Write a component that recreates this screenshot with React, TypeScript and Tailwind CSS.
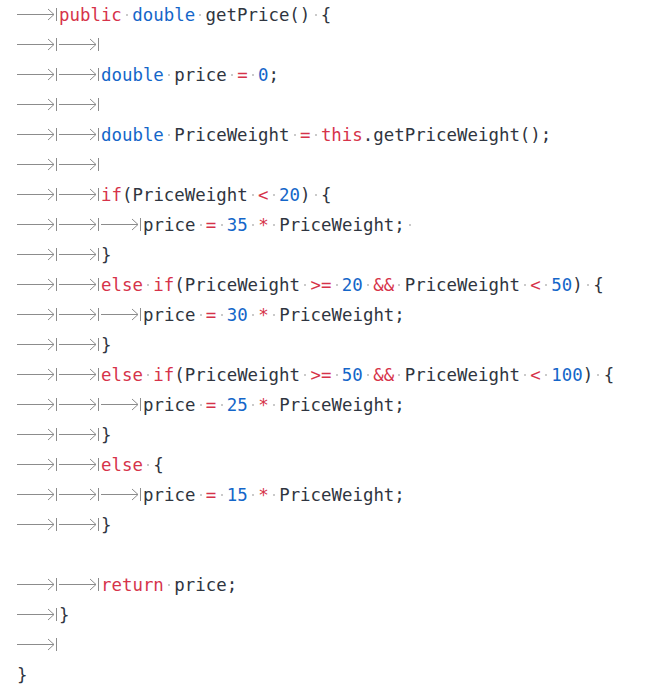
import React from "react";

const lines: string[] = [
  "\tpublic double getPrice() {",
  "\t\t",
  "\t\tdouble price = 0;",
  "\t\t",
  "\t\tdouble PriceWeight = this.getPriceWeight();",
  "\t\t",
  "\t\tif(PriceWeight < 20) {",
  "\t\t\tprice = 35 * PriceWeight; ",
  "\t\t}",
  "\t\telse if(PriceWeight >= 20 && PriceWeight < 50) {",
  "\t\t\tprice = 30 * PriceWeight;",
  "\t\t}",
  "\t\telse if(PriceWeight >= 50 && PriceWeight < 100) {",
  "\t\t\tprice = 25 * PriceWeight;",
  "\t\t}",
  "\t\telse {",
  "\t\t\tprice = 15 * PriceWeight;",
  "\t\t}",
  "",
  "\t\treturn price;",
  "\t}",
  "\t",
  "}",
];

const KW = new Set(["public", "if", "else", "return", "this"]);
const TY = new Set(["double"]);
const OPS = new Set(["=", "<", ">=", "&&", "*", ">"]);

function Tab() {
  return (
    <span className="inline-block w-[42px] h-[30px] align-top">
      <svg width="42" height="30" viewBox="0 0 42 30" className="block">
        <g stroke="#8c8c8c" strokeWidth="1" fill="none">
          <line x1="0" y1="14.5" x2="37" y2="14.5" />
          <polyline points="31,9 37,14.5 31,20" />
          <line x1="39.5" y1="8" x2="39.5" y2="21" />
        </g>
      </svg>
    </span>
  );
}

function Space() {
  return (
    <span className="inline-flex w-[10.47px] h-[30px] items-center justify-center align-top">
      <span className="block w-[2px] h-[2px] rounded-full bg-[#b8b8b8]" />
    </span>
  );
}

function renderLine(s: string) {
  const re = /(\t| |[A-Za-z_]\w*|\d+|>=|&&|[=<>*]|[^\s])/g;
  const out: React.ReactNode[] = [];
  let m: RegExpExecArray | null;
  let i = 0;
  while ((m = re.exec(s))) {
    const tok = m[1];
    const key = i++;
    if (tok === "\t") out.push(<Tab key={key} />);
    else if (tok === " ") out.push(<Space key={key} />);
    else if (KW.has(tok))
      out.push(
        <span key={key} className="text-[#d6334a]">
          {tok}
        </span>
      );
    else if (TY.has(tok))
      out.push(
        <span key={key} className="text-[#1466c9]">
          {tok}
        </span>
      );
    else if (/^\d+$/.test(tok))
      out.push(
        <span key={key} className="text-[#1466c9]">
          {tok}
        </span>
      );
    else if (OPS.has(tok))
      out.push(
        <span key={key} className="text-[#d6334a]">
          {tok}
        </span>
      );
    else
      out.push(
        <span key={key} className="text-[#2f3540]">
          {tok}
        </span>
      );
  }
  return out;
}

export default function App() {
  return (
    <div className="w-[655px] h-[685px] bg-white pl-[17px] overflow-hidden font-['DejaVu_Sans_Mono',monospace] text-[17.4px] leading-[30px] whitespace-pre">
      {lines.map((l, idx) => (
        <div key={idx} className="h-[30px] flex items-start">
          {renderLine(l)}
        </div>
      ))}
    </div>
  );
}
